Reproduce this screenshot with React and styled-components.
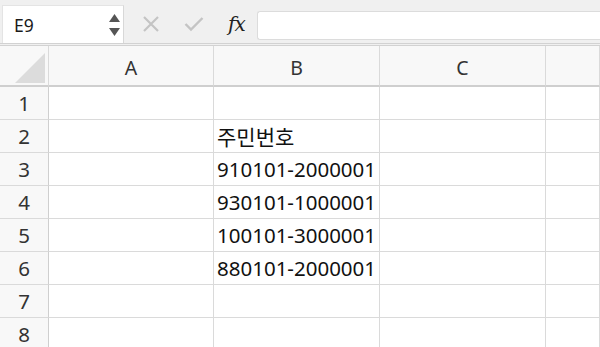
import React from "react";
import styled, { createGlobalStyle } from "styled-components";

const Global = createGlobalStyle`
  html, body { margin: 0; padding: 0; background: #ffffff; overflow: hidden; }
  * { box-sizing: border-box; }
`;

const Page = styled.div`
  width: 600px;
  height: 347px;
  overflow: hidden;
  font-family: "Noto Sans", "Noto Sans CJK KR", sans-serif;
  background: #fff;
`;

const Toolbar = styled.div`
  height: 46px;
  background: #f0f0f0;
  border-bottom: 3px double #d2d2d2;
  display: flex;
  align-items: stretch;
  padding-top: 5px;
`;

const NameBox = styled.div`
  width: 122px;
  margin-left: 2px;
  background: #fff;
  border-right: 1px solid #d8d8d8;
  border-left: 1px solid #e4e4e4;
  border-top: 1px solid #e4e4e4;
  display: flex;
  align-items: center;
  justify-content: space-between;
  padding: 0 3px 0 11px;
  font-size: 17.5px;
  color: #1a1a1a;
`;

const Spinner = styled.div`
  display: flex;
  flex-direction: column;
  gap: 6px;
`;

const Actions = styled.div`
  display: flex;
  align-items: center;
  padding-left: 18px;
  padding-right: 12px;
`;

const IconSlot = styled.div`
  width: 42px;
  display: flex;
  align-items: center;
  justify-content: flex-start;
`;

const Fx = styled.span`
  font-family: "DejaVu Serif", "Liberation Serif", serif;
  font-style: italic;
  font-size: 20px;
  color: #222;
  margin-left: 2px;
  letter-spacing: -1px;
`;

const FormulaInput = styled.div`
  flex: 1;
  margin: 6px 0 3px 0;
  background: #fff;
  border: 1px solid #dcdcdc;
  border-right: none;
  border-radius: 3px 0 0 3px;
`;

const Sheet = styled.div`
  display: grid;
  grid-template-columns: 49px 165px 166px 166px 1fr;
  grid-template-rows: 41px repeat(8, 33px);
`;

const HeadCell = styled.div`
  background: #f8f8f8;
  border-right: 1px solid #dadada;
  border-bottom: 2px solid #cfcfcf;
  display: flex;
  align-items: center;
  justify-content: center;
  font-size: 19.5px;
  color: #333;
  padding-top: 4px;
`;

const Corner = styled(HeadCell)`
  position: relative;
  padding: 0;
`;

const RowHead = styled.div`
  background: #f8f8f8;
  border-right: 1px solid #cfcfcf;
  border-bottom: 1px solid #dadada;
  display: flex;
  align-items: center;
  justify-content: center;
  font-size: 20.5px;
  color: #333;
`;

const Cell = styled.div`
  background: #fff;
  border-right: 1px solid #dadada;
  border-bottom: 1px solid #dadada;
  display: flex;
  align-items: center;
  padding-left: 3px;
  font-size: ${(p) => (p.$cjk ? "21px" : "20.5px")};
  color: #111;
  white-space: nowrap;
  overflow: visible;
`;

const cols = ["A", "B", "C", ""];
const data = { 2: "주민번호", 3: "910101-2000001", 4: "930101-1000001", 5: "100101-3000001", 6: "880101-2000001" };

export default function App() {
  return (
    <Page>
      <Global />
      <Toolbar>
        <NameBox>
          <span>E9</span>
          <Spinner>
            <svg width="11" height="8" viewBox="0 0 11 8"><path d="M5.5 0 L11 8 L0 8 Z" fill="#555" /></svg>
            <svg width="11" height="8" viewBox="0 0 11 8"><path d="M0 0 L11 0 L5.5 8 Z" fill="#555" /></svg>
          </Spinner>
        </NameBox>
        <Actions>
          <IconSlot>
            <svg width="18" height="18" viewBox="0 0 18 18"><path d="M2 2 L16 16 M16 2 L2 16" stroke="#c4c4c4" strokeWidth="2.2" /></svg>
          </IconSlot>
          <IconSlot>
            <svg width="20" height="16" viewBox="0 0 20 16"><path d="M1.5 8 L7 13.5 L18.5 2" stroke="#c4c4c4" strokeWidth="2.4" fill="none" /></svg>
          </IconSlot>
          <Fx>fx</Fx>
        </Actions>
        <FormulaInput />
      </Toolbar>
      <Sheet>
        <Corner>
          <svg width="32" height="32" viewBox="0 0 32 32" style={{ position: "absolute", left: 13, bottom: 2 }}>
            <path d="M32 2 L32 32 L2 32 Z" fill="#dcdcdc" />
          </svg>
        </Corner>
        {cols.map((c, i) => (
          <HeadCell key={"h" + i}>{c}</HeadCell>
        ))}
        {[1, 2, 3, 4, 5, 6, 7, 8].map((r) => (
          <React.Fragment key={r}>
            <RowHead>{r}</RowHead>
            <Cell />
            <Cell $cjk={r === 2}>{data[r] || ""}</Cell>
            <Cell />
            <Cell />
          </React.Fragment>
        ))}
      </Sheet>
    </Page>
  );
}
